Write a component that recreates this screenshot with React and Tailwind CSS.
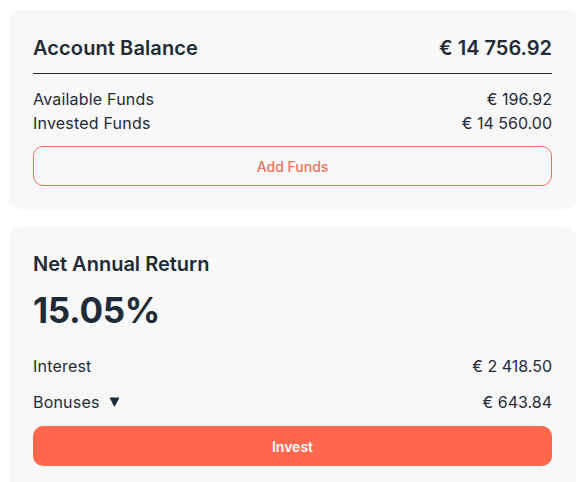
export default function App() {
  const font = { fontFamily: 'Inter, "Noto Sans", sans-serif' };
  return (
    <div className="min-h-screen bg-white pl-[9px] pr-[4px] pt-[9px] flex flex-col gap-[18px] text-[#1f2b37]" style={font}>
      <div className="bg-[#f8f8f8] rounded-[10px] px-[24px] pt-[25px] pb-[23px] flex flex-col">
        <div className="flex justify-between items-center h-[28px]">
          <span className="text-[20px] font-semibold tracking-[0.1px]">Account Balance</span>
          <span className="text-[20px] font-semibold">€ 14 756.92</span>
        </div>
        <div className="h-px bg-[#1f2b37] mt-[11px]" />
        <div className="mt-[13px] flex justify-between items-center h-[24px] text-[16px]">
          <span className="tracking-[0.2px]">Available Funds</span>
          <span>€ 196.92</span>
        </div>
        <div className="flex justify-between items-center h-[23px] text-[16px]">
          <span className="tracking-[0.2px]">Invested Funds</span>
          <span>€ 14 560.00</span>
        </div>
        <button className="mt-[12px] h-[40px] rounded-[10px] border border-[#e8705d] text-[#ee735f] text-[14px] font-medium bg-transparent">
          Add Funds
        </button>
      </div>
      <div className="bg-[#f8f8f8] rounded-t-[10px] px-[24px] pt-[23px] pb-[20px] flex flex-col">
        <div className="h-[28px] flex items-center text-[20px] font-semibold">Net Annual Return</div>
        <div className="mt-[12px] h-[40px] flex items-center text-[35px] font-bold tracking-[-0.3px]">15.05%</div>
        <div className="mt-[24px] flex justify-between items-center h-[24px] text-[16px]">
          <span className="tracking-[0.2px]">Interest</span>
          <span>€ 2 418.50</span>
        </div>
        <div className="mt-[12px] flex justify-between items-center h-[24px] text-[16px]">
          <span className="flex items-center gap-[9px] tracking-[0.2px]">
            Bonuses
            <svg width="11" height="10" viewBox="0 0 11 10"><path d="M1 1.5 Q0.5 0.5 1.8 0.5 L9.2 0.5 Q10.5 0.5 10 1.5 L6.2 8.8 Q5.5 10 4.8 8.8 Z" fill="#1f2b37" /></svg>
          </span>
          <span>€ 643.84</span>
        </div>
        <button className="mt-[12px] h-[40px] rounded-[10px] bg-[#ff684b] text-white text-[14px] font-semibold">
          Invest
        </button>
      </div>
    </div>
  );
}
